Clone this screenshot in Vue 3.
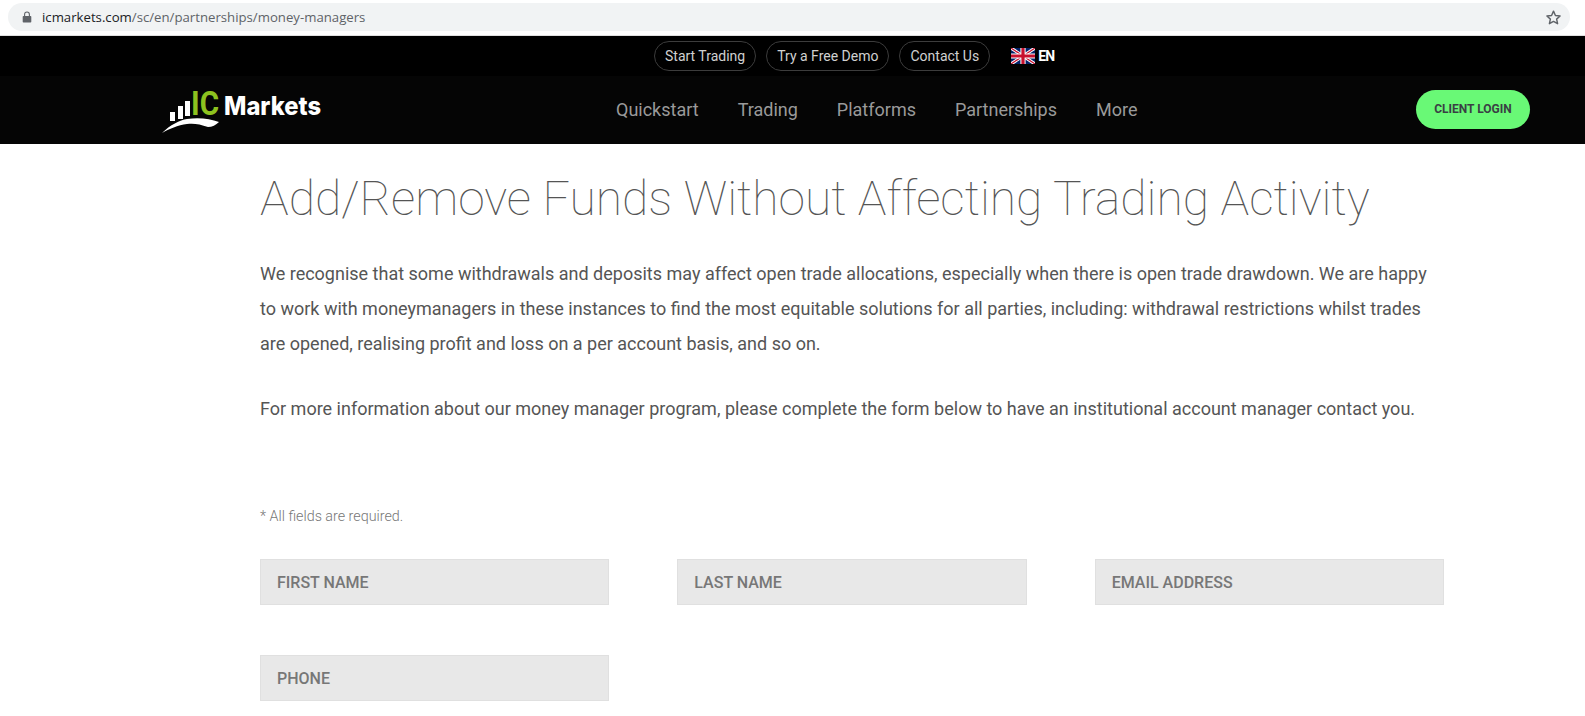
<template>
  <div class="page">
    <div class="browser-bar">
      <div class="address">
        <svg class="lock" width="10" height="12" viewBox="0 0 10 12">
          <path d="M1.500 5h7a.8.8 0 0 1 .8.8v4.900a.8.8 0 0 1-.8.8h-7a.8.8 0 0 1-.8-.8V5.800a.8.8 0 0 1 .8-.8z" fill="#5f6368" />
          <path d="M2.600 5V3.400a2.400 2.400 0 0 1 4.800 0V5" fill="none" stroke="#5f6368" stroke-width="1.100" />
        </svg>
        <span class="url"><span class="host">icmarkets.com</span>/sc/en/partnerships/money-managers</span>
        <svg class="star" width="17" height="17" viewBox="0 0 24 24">
          <path d="M12 3l2.700 6.100 6.600.7-4.900 4.500 1.400 6.500L12 17.500l-5.800 3.300 1.400-6.500-4.900-4.500 6.600-.7z" fill="none" stroke="#5f6368" stroke-width="2" stroke-linejoin="round" />
        </svg>
      </div>
    </div>

    <header>
      <div class="topbar">
        <a v-for="link in topLinks" :key="link" class="pill">{{ link }}</a>
        <span class="lang">
          <svg width="24" height="16" viewBox="0 0 60 40">
            <rect width="60" height="40" fill="#012169" />
            <path d="M0 0l60 40M60 0L0 40" stroke="#fff" stroke-width="8" />
            <path d="M0 0l60 40M60 0L0 40" stroke="#c8102e" stroke-width="3" />
            <path d="M30 0v40M0 20h60" stroke="#fff" stroke-width="13" />
            <path d="M30 0v40M0 20h60" stroke="#c8102e" stroke-width="8" />
          </svg>
          <b>EN</b>
        </span>
      </div>
      <div class="mainnav">
        <svg class="logo" width="185" height="52" viewBox="0 0 185 52">
          <g fill="#fff">
            <rect x="10" y="28" width="5" height="9" />
            <rect x="18" y="22" width="5" height="13" />
            <rect x="25" y="17" width="5" height="15" />
          </g>
          <path d="M2 49C10 41 20 36 27 35C40 33 50 35 59 38C56 41 52 43 48 43C40 40 33 39 27 40C18 41 9 45 2 49z" fill="#fff" />
          <text x="31" y="31" class="logo-ic" textLength="28" lengthAdjust="spacingAndGlyphs">IC</text>
          <text x="64" y="31" class="logo-name" textLength="97" lengthAdjust="spacingAndGlyphs">Markets</text>
        </svg>
        <nav>
          <a v-for="item in navItems" :key="item">{{ item }}</a>
        </nav>
        <button class="login">CLIENT LOGIN</button>
      </div>
    </header>

    <main>
      <h1>Add/Remove Funds Without Affecting Trading Activity</h1>
      <p>We recognise that some withdrawals and deposits may affect open trade allocations, especially when there is open trade drawdown. We are happy to work with moneymanagers in these instances to find the most equitable solutions for all parties, including: withdrawal restrictions whilst trades are opened, realising profit and loss on a per account basis, and so on.</p>
      <p>For more information about our money manager program, please complete the form below to have an institutional account manager contact you.</p>
      <small>* All fields are required.</small>
      <form class="fields">
        <input v-for="field in fields" :key="field" type="text" :placeholder="field" />
      </form>
    </main>
  </div>
</template>

<script setup>
const topLinks = ['Start Trading', 'Try a Free Demo', 'Contact Us']
const navItems = ['Quickstart', 'Trading', 'Platforms', 'Partnerships', 'More']
const fields = ['FIRST NAME', 'LAST NAME', 'EMAIL ADDRESS', 'PHONE']
</script>

<style>
html, body {
  margin: 0;
  background: #fff;
  overflow: hidden;
}
</style>

<style scoped>
.page {
  height: 716px;
  overflow: hidden;
  font-family: Roboto, "Liberation Sans", sans-serif;
  color: #4a4a4a;
}

.browser-bar {
  height: 36px;
  padding: 3px 15px 0 8px;
  box-sizing: border-box;
  border-bottom: 1px solid #e0e0e0;
}

.address {
  height: 28px;
  background: #f1f3f4;
  border-radius: 14px;
  display: flex;
  align-items: center;
  padding: 0 8px 0 14px;
}

.lock {
  margin-right: 10px;
}

.url {
  font-family: "Open Sans", sans-serif;
  font-size: 13.200px;
  color: #5f6368;
}

.host {
  color: #202124;
}

.star {
  margin-left: auto;
}

.topbar {
  height: 40px;
  background: #000;
  display: flex;
  align-items: center;
  padding-left: 654px;
}

.pill {
  height: 30px;
  box-sizing: border-box;
  display: flex;
  align-items: center;
  padding: 0 10px;
  margin-right: 10px;
  border: 1px solid #3c3c3c;
  border-radius: 15px;
  font-size: 14px;
  color: #d0d0d0;
}

.lang {
  display: flex;
  align-items: center;
  gap: 3px;
  margin-left: 11px;
  color: #fff;
  font-size: 14px;
}

.lang b {
  letter-spacing: -0.8px;
}

.mainnav {
  height: 68px;
  background: #050505;
  display: flex;
  align-items: center;
  padding: 0 55px 0 160px;
}

.logo {
  flex: none;
}

.logo-ic {
  font-family: Roboto, sans-serif;
  font-size: 33px;
  font-weight: 700;
  fill: #8dc21f;
}

.logo-name {
  font-family: Inter, Roboto, sans-serif;
  font-size: 26px;
  font-weight: 800;
  fill: #fff;
}

nav {
  display: flex;
  gap: 39px;
  margin: -2px 0 0 271px;
  font-size: 18px;
  color: #9a9a9a;
}

.login {
  margin: -2px 0 0 auto;
  width: 114px;
  height: 39px;
  border: 0;
  border-radius: 20px;
  padding: 0;
  background: #69f976;
  color: #3a3f44;
  font-family: Roboto, sans-serif;
  font-size: 12px;
  font-weight: 700;
}

main {
  padding-left: 260px;
  width: 1184px;
}

h1 {
  margin: 22px 0 24px;
  font-size: 48px;
  line-height: 66px;
  font-weight: 100;
  color: #555;
}

p {
  margin: 0 0 30px;
  font-size: 18px;
  line-height: 35px;
  color: #555;
  width: 1170px;
}

small {
  display: block;
  margin-top: 81px;
  font-size: 14.300px;
  font-weight: 300;
  color: #777;
  line-height: 18px;
}

.fields {
  display: grid;
  grid-template-columns: repeat(3, 349.330px);
  column-gap: 68px;
  row-gap: 50px;
  margin-top: 34px;
}

input {
  height: 46px;
  width: 100%;
  box-sizing: border-box;
  padding: 0 16px;
  background: #e8e8e8;
  border: 1px solid #e0e0e0;
  font-family: Roboto, sans-serif;
  font-size: 16px;
  font-weight: 500;
}

input::placeholder {
  color: #777;
  opacity: 1;
}
</style>
